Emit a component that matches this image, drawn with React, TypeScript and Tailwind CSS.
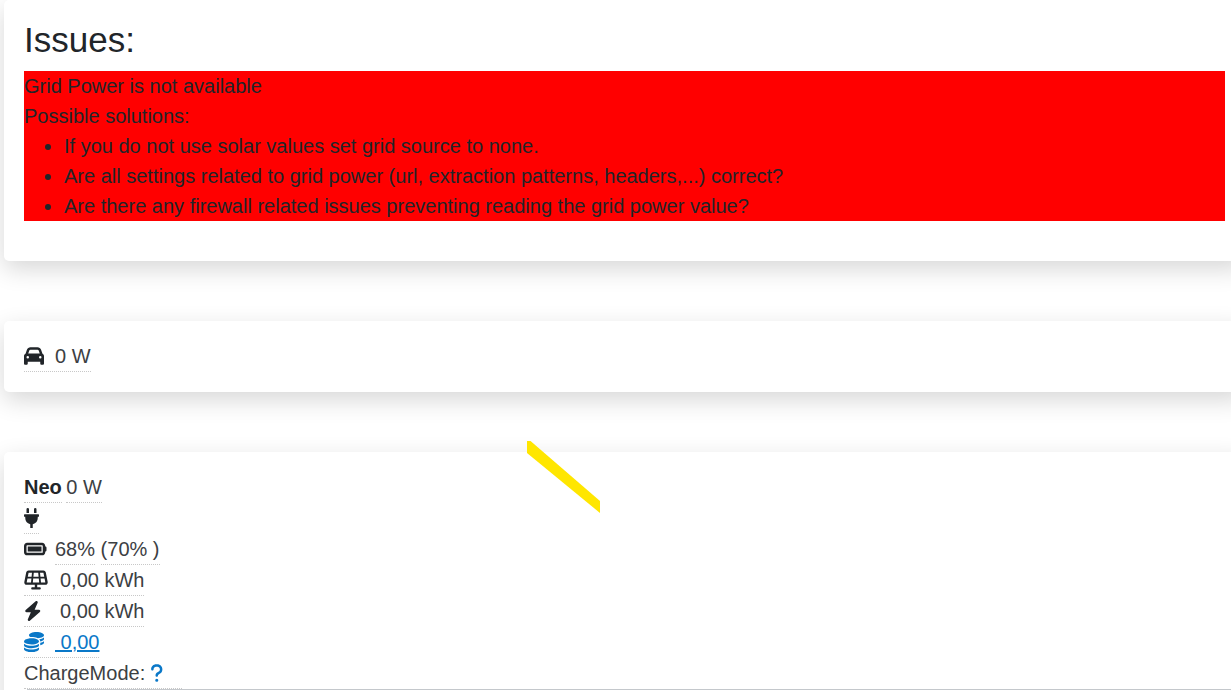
import { FaPlug } from "react-icons/fa";
import { FaBatteryFull, FaBolt, FaCar, FaCoins, FaQuestion, FaSolarPanel } from "react-icons/fa6";

const card = "w-[1241px] shrink-0 rounded-[5px] bg-white p-5 shadow-[0_8px_24px_rgba(0,0,0,0.16)]";
const dotted = "inline-block h-[31px] whitespace-nowrap border-b border-dotted border-[#c8c8c8]";

export default function App() {
  return (
    <div className="relative h-[690px] w-[1231px] overflow-hidden bg-white pl-1 font-['Liberation_Sans',Arial,sans-serif] text-[20px] leading-[30px] text-[#3c4043]">
      <div className="flex flex-col gap-[60px]">
        <section className={`${card} h-[261px]`}>
          <h2 className="mb-2 pb-[4px] text-[35px] leading-[39px] text-[#212529]">Issues:</h2>
          <div className="bg-[#ff0000] text-[#212529]">
            <div>Grid Power is not available</div>
            <div>Possible solutions:</div>
            <ul className="list-disc pl-10">
              <li>If you do not use solar values set grid source to none.</li>
              <li>Are all settings related to grid power (url, extraction patterns, headers,...) correct?</li>
              <li>Are there any firewall related issues preventing reading the grid power value?</li>
            </ul>
          </div>
        </section>

        <section className={card}>
          <div className="h-[31px]">
            <span className={dotted}>
              <FaCar className="mr-[11px] inline-block h-5 w-5 align-[-3px] text-[#212529]" />
              0 W
            </span>
          </div>
        </section>

        <section className={`${card} h-[400px]`}>
          <div className="h-[31px]">
            <span className={`${dotted} font-bold text-[#212529]`}>Neo</span>{" "}
            <span className={`${dotted} -ml-[1px]`}>0 W</span>
          </div>
          <div className="h-[31px]">
            <span className={dotted}>
              <FaPlug className="inline-block h-5 w-[15px] align-[-3px] text-[#212529]" />
            </span>
          </div>
          <div className="h-[31px]">
            <FaBatteryFull className="mr-[8.5px] inline-block h-5 w-[22.5px] align-[-3px] text-[#212529]" />
            <span className={dotted}>68%</span>{" "}
            <span className={dotted}>(70% )</span>
          </div>
          <div className="h-[31px]">
            <span className={dotted}>
              <FaSolarPanel className="mr-[12px] inline-block h-5 w-[24px] align-[-3px] text-[#212529]" />
              0,00 kWh
            </span>
          </div>
          <div className="h-[31px]">
            <span className={dotted}>
              <FaBolt className="mr-[18.5px] inline-block h-5 w-[17.5px] align-[-3px] text-[#212529]" />
              0,00 kWh
            </span>
          </div>
          <div className="h-[31px]">
            <span className={`${dotted} text-[#0a78c8]`}>
              <FaCoins className="mr-[11px] inline-block h-5 w-5 align-[-3px]" />
              <a href="#" className="underline">&nbsp;0,00</a>
            </span>
          </div>
          <div className="h-[31px]">
            <span className={`${dotted} w-[158px]`}>
              ChargeMode:{" "}
              <FaQuestion className="-ml-[1px] inline-block h-5 w-[13.5px] align-[-3px] text-[#0a78c8]" />
            </span>
          </div>
        </section>
      </div>

      {/* yellow stripe lying over the page */}
      <svg className="absolute left-[527px] top-[440px]" width="73" height="74" viewBox="0 0 73 74">
        <polygon points="0,1 3.5,1 73,61 73,73 0,13" fill="#ffe600" />
      </svg>

      <div className="absolute bottom-0 left-[27px] right-0 h-px bg-[#c4c8cc]" />
    </div>
  );
}
